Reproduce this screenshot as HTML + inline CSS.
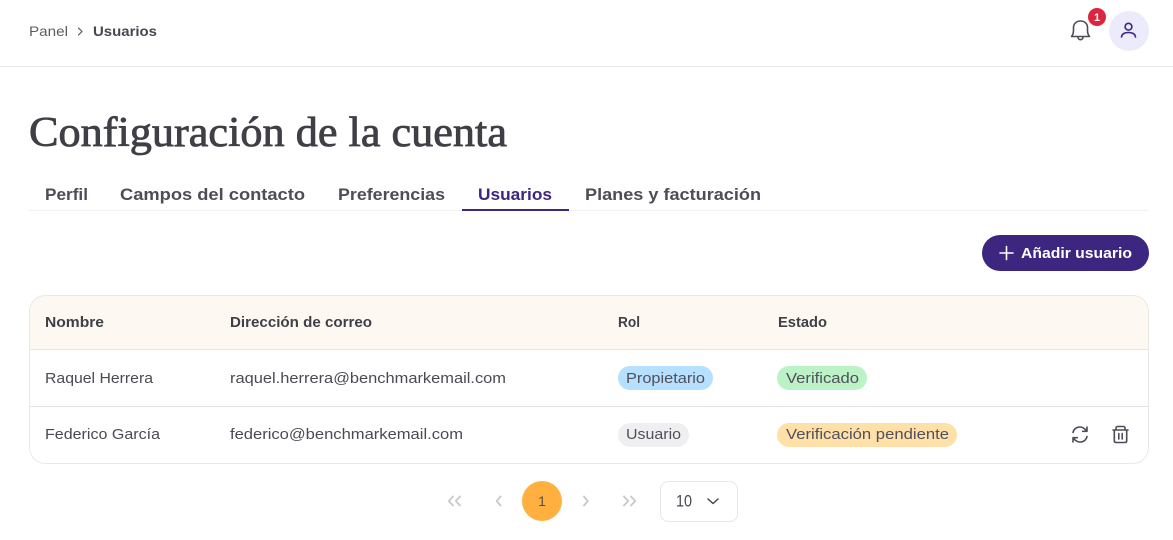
<!DOCTYPE html>
<html lang="es"><head><meta charset="utf-8"><title>Usuarios</title>
<style>
html,body{margin:0;padding:0;background:#fff;width:1173px;height:540px;overflow:hidden}
svg{display:block}
text{font-family:"Liberation Sans",sans-serif;font-size:14px;fill:#47474f}
.b{font-weight:bold}
.t{font-size:17px;font-weight:bold;fill:#4d4d56}
.h{font-size:14.500px;font-weight:bold;fill:#3f3f46}
.r{font-size:15px;fill:#4a4a52}
.p{font-size:15px;fill:#50505a}
.i{fill:none;stroke:#4d4d56;stroke-width:1.600;stroke-linecap:round;stroke-linejoin:round}
.c{fill:none;stroke:#c9c9ce;stroke-width:1.900;stroke-linecap:round;stroke-linejoin:round}
</style></head><body>
<svg width="1173" height="540" viewBox="0 0 1173 540" xmlns="http://www.w3.org/2000/svg">
<rect x="0" y="66" width="1173" height="1" fill="#e6e6e8"/>
<text x="29" y="36" textLength="39" lengthAdjust="spacingAndGlyphs" style="fill:#5d5d65">Panel</text>
<path d="M78.500 28l3.500 3.500-3.500 3.500" fill="none" stroke="#55555d" stroke-width="1.200" stroke-linecap="round" stroke-linejoin="round"/>
<text x="93" y="36" class="b" textLength="64" lengthAdjust="spacingAndGlyphs">Usuarios</text>

<path class="i" d="M1071.500 36.500h18c-1.500-1.500-2-3.500-2-6.500v-2.500c0-3.800-3-6.500-7-6.500s-7 2.700-7 6.500v2.500c0 3-.5 5-2 6.500zM1078 37c0 1.700 1.100 2.700 2.500 2.700s2.500-1 2.500-2.700"/>
<circle cx="1097" cy="17" r="9" fill="#dc2640"/>
<text x="1097" y="21" text-anchor="middle" class="b" style="font-size:11px;fill:#fff">1</text>
<circle cx="1129" cy="31" r="20" fill="#ecebfb"/>
<circle cx="1128.500" cy="26.700" r="3.400" fill="none" stroke="#3d2680" stroke-width="1.600"/>
<path d="M1121.500 37c.4-3 3-4.500 7-4.500s6.600 1.500 7 4.500" fill="none" stroke="#3d2680" stroke-width="1.600" stroke-linecap="round"/>

<text x="29" y="146" textLength="478" lengthAdjust="spacingAndGlyphs" stroke="#3f3f46" stroke-width=".8" style="font-family:'Liberation Serif',serif;font-size:42px;fill:#3f3f46">Configuración de la cuenta</text>

<rect x="29" y="210" width="1119" height="1" fill="#f2f2f3"/>
<text x="45" y="200" class="t" textLength="43" lengthAdjust="spacingAndGlyphs">Perfil</text>
<text x="120" y="200" class="t" textLength="185" lengthAdjust="spacingAndGlyphs">Campos del contacto</text>
<text x="338" y="200" class="t" textLength="107" lengthAdjust="spacingAndGlyphs">Preferencias</text>
<text x="478" y="200" class="t" textLength="74" lengthAdjust="spacingAndGlyphs" style="fill:#3d2680">Usuarios</text>
<text x="585" y="200" class="t" textLength="176" lengthAdjust="spacingAndGlyphs">Planes y facturación</text>
<rect x="462" y="209" width="107" height="2" fill="#3d2680"/>

<rect x="982" y="235" width="167" height="36" rx="18" fill="#3d2680"/>
<path d="M1006.500 246.500v13M1000 253h13" stroke="#fff" stroke-width="1.600" stroke-linecap="round"/>
<text x="1021" y="258" class="b" textLength="111" lengthAdjust="spacingAndGlyphs" style="font-size:15px;fill:#fff">Añadir usuario</text>

<path d="M29.500 350V311a16 16 0 0 1 16-16H1132a16 16 0 0 1 16.500 16V350z" fill="#fdf8f2"/>
<rect x="29.500" y="295.500" width="1119" height="168" rx="16" fill="none" stroke="#e8e8ea"/>
<rect x="30" y="349" width="1118" height="1" fill="#e4e4e6"/>
<rect x="30" y="406" width="1118" height="1" fill="#e4e4e6"/>

<text x="45" y="327" class="h" textLength="59" lengthAdjust="spacingAndGlyphs">Nombre</text>
<text x="230" y="327" class="h" textLength="142" lengthAdjust="spacingAndGlyphs">Dirección de correo</text>
<text x="618" y="327" class="h" textLength="22" lengthAdjust="spacingAndGlyphs">Rol</text>
<text x="778" y="327" class="h" textLength="49" lengthAdjust="spacingAndGlyphs">Estado</text>

<text x="45" y="383" class="r" textLength="108" lengthAdjust="spacingAndGlyphs">Raquel Herrera</text>
<text x="230" y="383" class="r" textLength="276" lengthAdjust="spacingAndGlyphs">raquel.herrera@benchmarkemail.com</text>
<text x="45" y="439" class="r" textLength="115" lengthAdjust="spacingAndGlyphs">Federico García</text>
<text x="230" y="439" class="r" textLength="233" lengthAdjust="spacingAndGlyphs">federico@benchmarkemail.com</text>

<rect x="618" y="366" width="95" height="24" rx="12" fill="#b5e0ff"/>
<text x="626" y="383" class="p" textLength="79" lengthAdjust="spacingAndGlyphs">Propietario</text>
<rect x="777" y="366" width="90" height="24" rx="12" fill="#bbf2c6"/>
<text x="786" y="383" class="p" textLength="73" lengthAdjust="spacingAndGlyphs">Verificado</text>
<rect x="618" y="423" width="71" height="24" rx="12" fill="#efeff1"/>
<text x="626" y="439" class="p" textLength="55" lengthAdjust="spacingAndGlyphs">Usuario</text>
<rect x="777" y="423" width="180" height="24" rx="12" fill="#ffe0a8"/>
<text x="786" y="439" class="p" textLength="163" lengthAdjust="spacingAndGlyphs">Verificación pendiente</text>

<path class="i" d="M1073 432.500c.6-3.200 3.400-5.500 6.800-5.500 2.400 0 4.200 1 5.700 2.600l1.500 1.400M1087 427v4.300h-4.300M1087 436.500c-.6 3.200-3.400 5.500-6.800 5.500-2.400 0-4.200-1-5.700-2.600l-1.500-1.400M1073 442v-4.300h4.300"/>
<path class="i" d="M1113 430h15M1114.300 430v10.800c0 1 .7 1.700 1.700 1.700h9c1 0 1.700-.7 1.700-1.700V430M1116 430v-2c0-.9.700-1.500 1.500-1.500h6c.8 0 1.500.6 1.500 1.500v2M1118.800 433.500v5.500M1122.200 433.500v5.500"/>

<path class="c" d="M453 496.500l-4.200 4.500 4.200 4.500M460 496.500l-4.200 4.500 4.200 4.500"/>
<path class="c" d="M500.500 496.500l-3.800 4.500 3.800 4.500"/>
<circle cx="542" cy="501" r="20" fill="#ffb03f"/>
<text x="542" y="506" text-anchor="middle" style="font-size:14px;fill:#55504a">1</text>
<path class="c" d="M584 496.500l3.800 4.500-3.800 4.500"/>
<path class="c" d="M624 496.500l4.200 4.500-4.200 4.500M631 496.500l4.200 4.500-4.200 4.500"/>
<rect x="660.500" y="481.500" width="77" height="40" rx="8" fill="#fff" stroke="#e8e8ea"/>
<text x="676" y="506.500" textLength="16" lengthAdjust="spacingAndGlyphs" style="font-size:17px;fill:#47474f">10</text>
<path d="M708 499l5 4.500 5-4.500" fill="none" stroke="#47474f" stroke-width="1.500" stroke-linecap="round" stroke-linejoin="round"/>
</svg>
</body></html>
